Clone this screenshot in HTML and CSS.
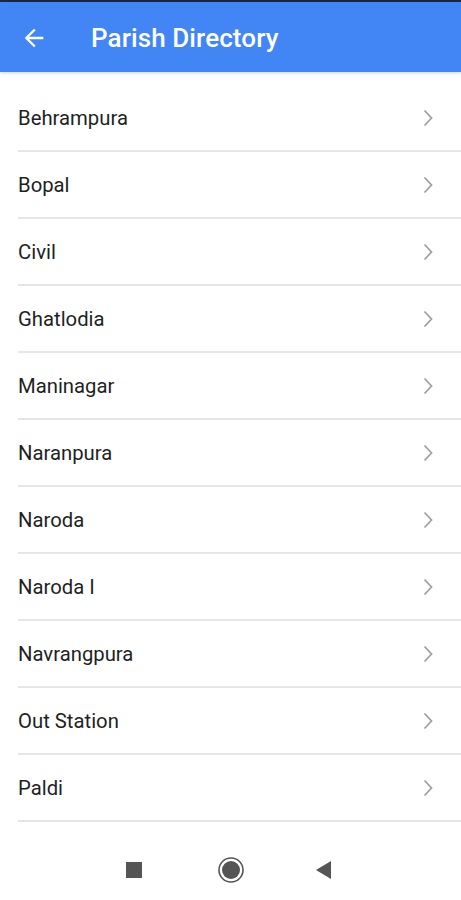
FILE: index.html
```html
<!DOCTYPE html>
<html>
<head>
<meta charset="utf-8">
<link rel="stylesheet" href="styles.css">
</head>
<body>
<div class="screen">
  <div class="status"></div>
  <header class="appbar">
    <svg class="back" width="28" height="28" viewBox="0 0 24 24"><path d="M20 11H7.83l5.59-5.59L12 4l-8 8 8 8 1.41-1.41L7.83 13H20v-2z" fill="#fff"/></svg>
    <h1 class="title">Parish Directory</h1>
  </header>
  <ul class="list">
    <li class="row"><span>Behrampura</span><svg class="chev" width="10" height="18" viewBox="0 0 10 18"><path d="M1.5 1.5L8.5 9L1.5 16.5" fill="none" stroke="#a0a0a0" stroke-width="1.8"/></svg></li>
    <li class="row"><span>Bopal</span><svg class="chev" width="10" height="18" viewBox="0 0 10 18"><path d="M1.5 1.5L8.5 9L1.5 16.5" fill="none" stroke="#a0a0a0" stroke-width="1.8"/></svg></li>
    <li class="row"><span>Civil</span><svg class="chev" width="10" height="18" viewBox="0 0 10 18"><path d="M1.5 1.5L8.5 9L1.5 16.5" fill="none" stroke="#a0a0a0" stroke-width="1.8"/></svg></li>
    <li class="row"><span>Ghatlodia</span><svg class="chev" width="10" height="18" viewBox="0 0 10 18"><path d="M1.5 1.5L8.5 9L1.5 16.5" fill="none" stroke="#a0a0a0" stroke-width="1.8"/></svg></li>
    <li class="row"><span>Maninagar</span><svg class="chev" width="10" height="18" viewBox="0 0 10 18"><path d="M1.5 1.5L8.5 9L1.5 16.5" fill="none" stroke="#a0a0a0" stroke-width="1.8"/></svg></li>
    <li class="row"><span>Naranpura</span><svg class="chev" width="10" height="18" viewBox="0 0 10 18"><path d="M1.5 1.5L8.5 9L1.5 16.5" fill="none" stroke="#a0a0a0" stroke-width="1.8"/></svg></li>
    <li class="row"><span>Naroda</span><svg class="chev" width="10" height="18" viewBox="0 0 10 18"><path d="M1.5 1.5L8.5 9L1.5 16.5" fill="none" stroke="#a0a0a0" stroke-width="1.8"/></svg></li>
    <li class="row"><span>Naroda I</span><svg class="chev" width="10" height="18" viewBox="0 0 10 18"><path d="M1.5 1.5L8.5 9L1.5 16.5" fill="none" stroke="#a0a0a0" stroke-width="1.8"/></svg></li>
    <li class="row"><span>Navrangpura</span><svg class="chev" width="10" height="18" viewBox="0 0 10 18"><path d="M1.5 1.5L8.5 9L1.5 16.5" fill="none" stroke="#a0a0a0" stroke-width="1.8"/></svg></li>
    <li class="row"><span>Out Station</span><svg class="chev" width="10" height="18" viewBox="0 0 10 18"><path d="M1.5 1.5L8.5 9L1.5 16.5" fill="none" stroke="#a0a0a0" stroke-width="1.8"/></svg></li>
    <li class="row"><span>Paldi</span><svg class="chev" width="10" height="18" viewBox="0 0 10 18"><path d="M1.5 1.5L8.5 9L1.5 16.5" fill="none" stroke="#a0a0a0" stroke-width="1.8"/></svg></li>
  </ul>
  <nav class="navbar">
    <svg class="nav-recent" width="18" height="18" viewBox="0 0 18 18"><rect x="1" y="1" width="16" height="16" fill="#555"/></svg>
    <svg class="nav-home" width="28" height="28" viewBox="0 0 28 28"><circle cx="14" cy="14" r="12" fill="none" stroke="#555" stroke-width="1.6"/><circle cx="14" cy="14" r="9" fill="#555"/></svg>
    <svg class="nav-back" width="18" height="20" viewBox="0 0 18 20"><path d="M16 1L1 10L16 19Z" fill="#555"/></svg>
  </nav>
</div>
</body>
</html>
```
FILE: styles.css
```css
* { box-sizing: border-box; }
html, body { margin: 0; padding: 0; background: #fff; }
body { font-family: Roboto, "Noto Sans", "Liberation Sans", sans-serif; }
.screen { width: 461px; height: 900px; display: flex; flex-direction: column; overflow: hidden; }
.status { height: 2px; background: #1c2744; flex: none; }
.appbar {
  height: 70px; flex: none; background: #4285f4;
  display: flex; align-items: center; padding-left: 20px;
  box-shadow: 0 1px 3px rgba(0,0,0,0.18);
  position: relative; z-index: 1;
}
.back { display: block; margin-top: 2px; }
.title { margin: 2px 0 0 43px; color: #fff; font-size: 26px; font-weight: 500; letter-spacing: 0.1px; }
.list { list-style: none; margin: 0; padding: 13px 0 0 18px; flex: 1; }
.row {
  height: 67px; display: flex; align-items: center; justify-content: space-between;
  border-bottom: 2px solid #e6e6e6; padding-right: 28px;
  font-size: 20.3px; color: #1f1f1f;
}
.chev { display: block; }
.navbar { height: 62px; flex: none; display: flex; align-items: center; justify-content: center; padding: 2px 4px 0 0; }
.navbar svg { display: block; }
.nav-home { margin: 0 70px 0 74px; }
```
